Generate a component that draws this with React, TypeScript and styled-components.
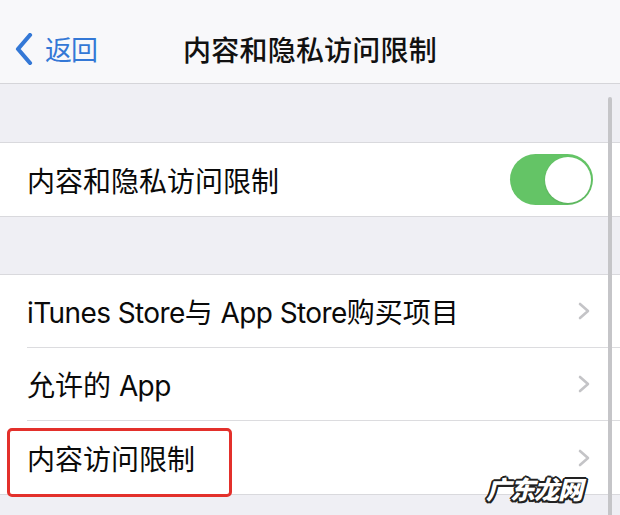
import styled, { createGlobalStyle } from "styled-components";

const GlobalStyle = createGlobalStyle`
  html, body {
    margin: 0;
    padding: 0;
    background: #efeff4;
  }
  body {
    font-family: Inter, "Noto Sans CJK SC", sans-serif;
    -webkit-font-smoothing: antialiased;
  }
`;

const Screen = styled.div`
  position: relative;
  width: 620px;
  height: 515px;
  overflow: hidden;
  background: #efeff4;
`;

const NavBar = styled.header`
  height: 84px;
  box-sizing: border-box;
  padding-top: 14px;
  background: #f8f8fa;
  border-bottom: 1px solid #d5d5d9;
  display: grid;
  grid-template-columns: 1fr auto 1fr;
  align-items: center;
`;

const BackButton = styled.div`
  display: flex;
  align-items: center;
  gap: 12px;
  padding-left: 15px;
  color: #3478d6;
  font-size: 27px;
  letter-spacing: -1px;

  svg {
    display: block;
  }
`;

const Title = styled.h1`
  margin: 0;
  font-size: 28px;
  font-weight: 500;
  color: #111;
  letter-spacing: 0.2px;
`;

const Gap = styled.div<{ $h: number }>`
  height: ${(p) => p.$h}px;
`;

const Group = styled.section`
  background: #fff;
  border-top: 1px solid #d9d9dd;
  border-bottom: 1px solid #d9d9dd;
`;

const Row = styled.div`
  position: relative;
  padding-left: 27px;
`;

const RowInner = styled.div<{ $last?: boolean }>`
  display: flex;
  align-items: center;
  justify-content: space-between;
  padding-right: 27px;
  border-bottom: ${(p) => (p.$last ? "none" : "1px solid #dcdcdf")};
  height: ${(p) => (p.$last ? 73 : 72)}px;
`;

const Label = styled.span`
  font-size: 28px;
  color: #0a0a0a;
  letter-spacing: 0;

  /* latin runs are set a little tighter, like the system font */
  b {
    font-weight: 400;
    letter-spacing: -0.6px;
  }
`;

const Toggle = styled.div<{ $on: boolean }>`
  width: 83px;
  height: 51px;
  border-radius: 26px;
  background: ${(p) => (p.$on ? "#64c466" : "#e5e5ea")};
  display: flex;
  align-items: center;
  justify-content: ${(p) => (p.$on ? "flex-end" : "flex-start")};
  padding: 0 2px;
  box-sizing: border-box;
`;

const Knob = styled.div`
  width: 46px;
  height: 46px;
  border-radius: 50%;
  background: #fff;
  box-shadow: 0 1px 2px rgba(0, 0, 0, 0.12);
`;

const Chevron = styled.svg`
  margin-right: 3px;
`;

// red annotation drawn over the last row
const Highlight = styled.div`
  position: absolute;
  left: 7px;
  top: 7px;
  width: 225px;
  height: 69px;
  box-sizing: border-box;
  border: 3px solid #e3302b;
  border-radius: 5px;
  pointer-events: none;
`;

const ScrollBar = styled.div`
  position: absolute;
  left: 608px;
  top: 97px;
  bottom: 0;
  width: 4px;
  border-radius: 2px 2px 0 0;
  background: #c5c5c8;
`;

const Watermark = styled.div`
  position: absolute;
  left: 486px;
  top: 470px;
  font-family: "Noto Sans CJK SC", sans-serif;
  font-size: 25px;
  font-weight: 900;
  font-style: italic;
  color: #fff;
  letter-spacing: -1px;
  text-shadow: -1.5px -1.5px 0 #222, 1.5px -1.5px 0 #222, -1.5px 1.5px 0 #222,
    1.5px 1.5px 0 #222, 0 -2px 0 #222, 0 2px 0 #222, -2px 0 0 #222,
    2px 0 0 #222;
`;

const RightChevron = () => (
  <Chevron width="12" height="18" viewBox="0 0 12 18">
    <polyline
      points="2,2 10,9 2,16"
      fill="none"
      stroke="#c4c4c7"
      strokeWidth="2.6"
      strokeLinecap="round"
      strokeLinejoin="round"
    />
  </Chevron>
);

const items = [
  <>
    <b>iTunes Store</b>与 <b>App Store</b>购买项目
  </>,
  <>
    允许的 <b>App</b>
  </>,
  <>内容访问限制</>,
];

export default function App() {
  return (
    <>
      <GlobalStyle />
      <Screen>
        <NavBar>
          <BackButton>
            <svg width="18" height="32" viewBox="0 0 18 32">
              <polyline
                points="15,2 3,16 15,30"
                fill="none"
                stroke="#3478d6"
                strokeWidth="4.2"
                strokeLinecap="round"
                strokeLinejoin="round"
              />
            </svg>
            <span>返回</span>
          </BackButton>
          <Title>内容和隐私访问限制</Title>
          <div />
        </NavBar>
        <Gap $h={58} />
        <Group>
          <Row>
            <RowInner $last>
              <Label>内容和隐私访问限制</Label>
              <Toggle $on>
                <Knob />
              </Toggle>
            </RowInner>
          </Row>
        </Group>
        <Gap $h={57} />
        <Group>
          {items.map((item, i) => (
            <Row key={i}>
              <RowInner $last={i === items.length - 1}>
                <Label>{item}</Label>
                <RightChevron />
              </RowInner>
              {i === items.length - 1 && <Highlight />}
            </Row>
          ))}
        </Group>
        <ScrollBar />
        <Watermark>广东龙网</Watermark>
      </Screen>
    </>
  );
}
